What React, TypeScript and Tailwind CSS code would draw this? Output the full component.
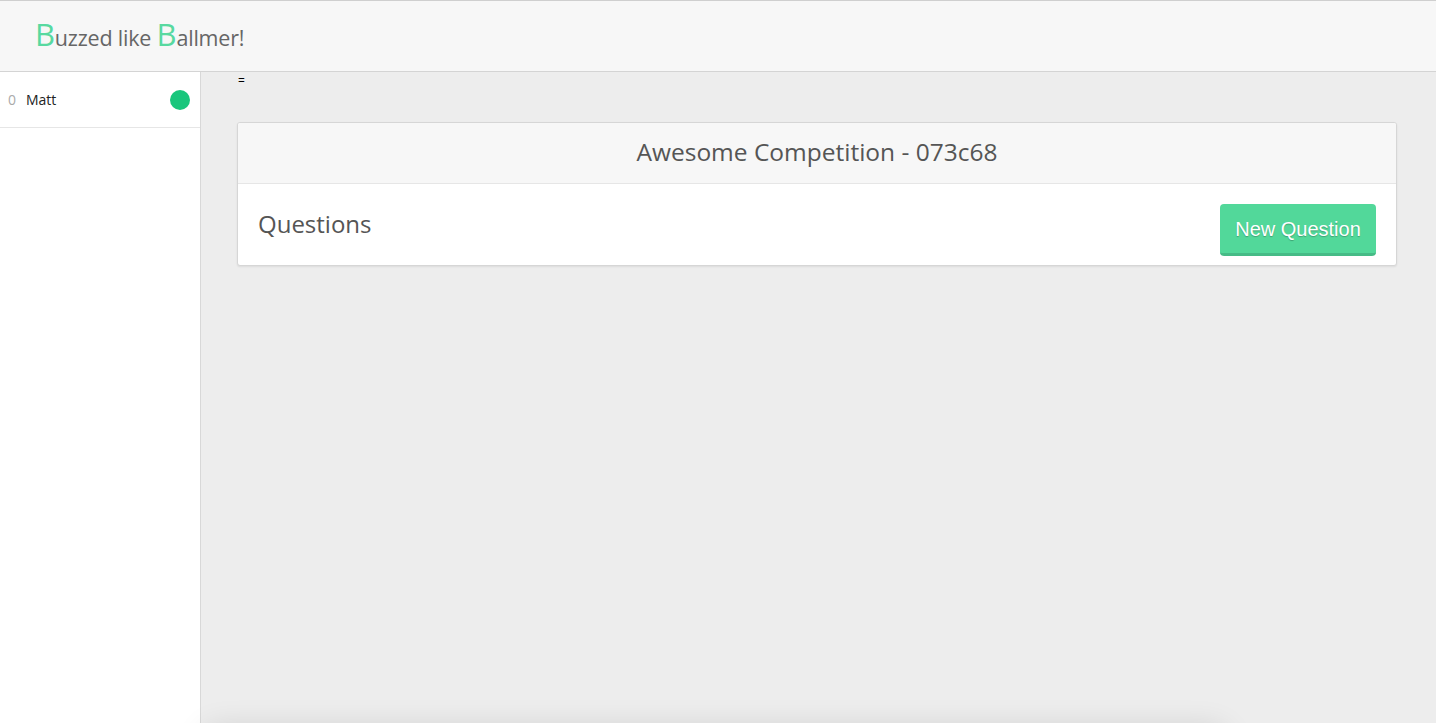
import React from "react";

export default function App() {
  return (
    <div className="relative h-[723px] w-[1436px] overflow-hidden bg-[#ededed]" style={{ fontFamily: '"Open Sans", sans-serif' }}>
      <header className="flex h-[72px] items-center border-t border-b border-t-[#cfcfcf] border-b-[#d4d4d4] bg-[#f7f7f7] pl-[35px]">
        <div className="mt-[-4px] text-[21.5px] tracking-[-0.2px] text-[#666]">
          <span className="text-[31px] text-[#58d9a0]">B</span>uzzed like <span className="text-[31px] text-[#58d9a0]">B</span>allmer!
        </div>
      </header>
      <div className="flex h-[651px]">
        <aside className="w-[201px] shrink-0 border-r border-[#d8d8d8] bg-white">
          <div className="flex h-[56px] items-center border-b border-[#e6e6e6] pl-[8px] pr-[10px] text-[14px]">
            <span className="w-[18px] text-[#aaa]">0</span>
            <span className="text-[#222]">Matt</span>
            <span className="ml-auto h-[20px] w-[20px] rounded-full bg-[#19c67c]" />
          </div>
        </aside>
        <main className="flex-1 pl-[36px] pr-[39px]">
          <div className="h-[50px] pl-[1px] pt-[1px] text-[12px] leading-[16px] text-black">=</div>
          <div className="overflow-hidden rounded-[3px] border border-[#d6d6d6] bg-white shadow-[0_1px_2px_rgba(0,0,0,0.08)]">
            <div className="flex h-[61px] items-center justify-center border-b border-[#e6e6e6] bg-[#f7f7f7] pb-[1px] text-[24.5px] text-[#555]">
              Awesome Competition - 073c68
            </div>
            <div className="flex h-[81px] items-start justify-between pl-[20px] pr-[20px]">
              <div className="mt-[22px] text-[24px] text-[#555]">Questions</div>
              <button
                className="mt-[20px] h-[52px] w-[156px] rounded-[4px] border-b-[3px] border-[#46bb86] bg-[#52d89a] pt-[1px] text-[20px] text-white [text-shadow:0_1px_1px_rgba(0,0,0,0.25)]"
                style={{ fontFamily: '"Liberation Sans", Arial, sans-serif' }}
              >
                New Question
              </button>
            </div>
          </div>
        </main>
      </div>
      <div className="absolute left-[210px] top-[735px] h-[40px] w-[1010px] rounded-[8px] bg-[#ededed] shadow-[0_0_30px_8px_rgba(0,0,0,0.12)]" />
    </div>
  );
}
